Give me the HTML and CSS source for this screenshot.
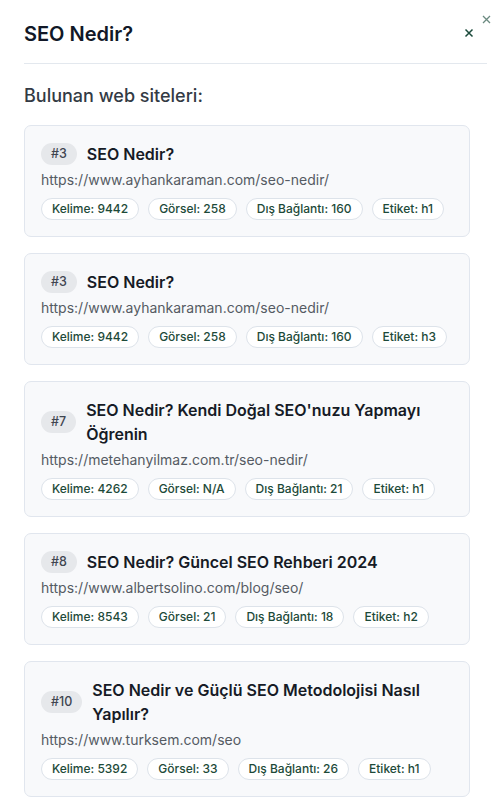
FILE: index.html
```html
<!DOCTYPE html>
<html lang="tr">
<head>
<meta charset="utf-8">
<link rel="stylesheet" href="styles.css">
</head>
<body>
<button class="outer-close" aria-label="Kapat"><svg width="9" height="9" viewBox="0 0 9 9"><path d="M1 1L8 8M8 1L1 8" stroke="currentColor" stroke-width="1.3" fill="none"/></svg></button>
<div class="modal">
  <header class="head">
    <h1 class="title">SEO Nedir?</h1>
    <button class="close" aria-label="Kapat"><svg width="10" height="10" viewBox="0 0 10 10"><path d="M1.5 1.5L8.5 8.5M8.5 1.5L1.5 8.5" stroke="currentColor" stroke-width="1.5" fill="none"/></svg></button>
  </header>
  <h2 class="sub">Bulunan web siteleri:</h2>
  <div class="list">
    <div class="card">
      <div class="row"><span class="rank">#3</span><span class="name">SEO Nedir?</span></div>
      <div class="url">https://www.ayhankaraman.com/seo-nedir/</div>
      <div class="chips"><span class="chip">Kelime: 9442</span><span class="chip">Görsel: 258</span><span class="chip">Dış Bağlantı: 160</span><span class="chip">Etiket: h1</span></div>
    </div>
    <div class="card">
      <div class="row"><span class="rank">#3</span><span class="name">SEO Nedir?</span></div>
      <div class="url">https://www.ayhankaraman.com/seo-nedir/</div>
      <div class="chips"><span class="chip">Kelime: 9442</span><span class="chip">Görsel: 258</span><span class="chip">Dış Bağlantı: 160</span><span class="chip">Etiket: h3</span></div>
    </div>
    <div class="card">
      <div class="row"><span class="rank">#7</span><span class="name">SEO Nedir? Kendi Doğal SEO'nuzu Yapmayı Öğrenin</span></div>
      <div class="url">https://metehanyilmaz.com.tr/seo-nedir/</div>
      <div class="chips"><span class="chip">Kelime: 4262</span><span class="chip">Görsel: N/A</span><span class="chip">Dış Bağlantı: 21</span><span class="chip">Etiket: h1</span></div>
    </div>
    <div class="card">
      <div class="row"><span class="rank">#8</span><span class="name">SEO Nedir? Güncel SEO Rehberi 2024</span></div>
      <div class="url">https://www.albertsolino.com/blog/seo/</div>
      <div class="chips"><span class="chip">Kelime: 8543</span><span class="chip">Görsel: 21</span><span class="chip">Dış Bağlantı: 18</span><span class="chip">Etiket: h2</span></div>
    </div>
    <div class="card">
      <div class="row"><span class="rank">#10</span><span class="name">SEO Nedir ve Güçlü SEO Metodolojisi Nasıl Yapılır?</span></div>
      <div class="url">https://www.turksem.com/seo</div>
      <div class="chips"><span class="chip">Kelime: 5392</span><span class="chip">Görsel: 33</span><span class="chip">Dış Bağlantı: 26</span><span class="chip">Etiket: h1</span></div>
    </div>
  </div>
</div>
</body>
</html>
```

FILE: styles.css
```css
* { box-sizing: border-box; }
html, body { margin: 0; padding: 0; background: #fff; }
body {
  font-family: Inter, "Noto Sans", sans-serif;
  color: #1f2937;
  position: relative;
  width: 496px;
  height: 804px;
  overflow: hidden;
}
button { border: 0; background: none; padding: 0; cursor: pointer; font: inherit; }
.outer-close {
  position: absolute;
  top: 15px;
  left: 482px;
  width: 9px;
  height: 9px;
  color: #6b8a80;
  display: flex;
}
.modal {
  padding: 0 9px 0 24px;
}
.head {
  height: 64px;
  border-bottom: 1px solid #e3e8ee;
  display: flex;
  align-items: center;
  justify-content: space-between;
  padding-top: 4px;
}
.title {
  margin: 0;
  font-size: 20px;
  line-height: 28px;
  font-weight: 600;
  color: #111827;
}
.close {
  color: #1b4a3b;
  width: 10px;
  height: 10px;
  display: flex;
  margin-right: 13px;
  margin-top: -2px;
}
.sub {
  margin: 19px 0 0;
  font-size: 18px;
  line-height: 26px;
  font-weight: 500;
  color: #333a44;
}
.list {
  margin-top: 16px;
  width: 446px;
  display: flex;
  flex-direction: column;
  gap: 16px;
}
.card {
  background: #f8f9fb;
  border: 1px solid #e1e6ee;
  border-radius: 7px;
  padding: 16px;
}
.row {
  display: flex;
  align-items: center;
  gap: 10px;
}
.rank {
  flex: none;
  background: #e6e8eb;
  color: #3f4550;
  font-size: 12.5px;
  font-weight: 500;
  line-height: 22px;
  height: 22px;
  padding: 0 10px;
  border-radius: 11px;
}
.name {
  font-size: 16px;
  line-height: 24px;
  font-weight: 600;
  color: #161b26;
}
.url {
  margin-top: 4px;
  font-size: 14px;
  line-height: 20px;
  color: #555b63;
}
.chips {
  margin-top: 8px;
  display: flex;
  gap: 9px;
}
.chip {
  font-size: 12px;
  line-height: 18px;
  font-weight: 500;
  color: #1d4a39;
  background: #fff;
  border: 1px solid #dde3ea;
  border-radius: 11px;
  padding: 1px 10px;
}
```
